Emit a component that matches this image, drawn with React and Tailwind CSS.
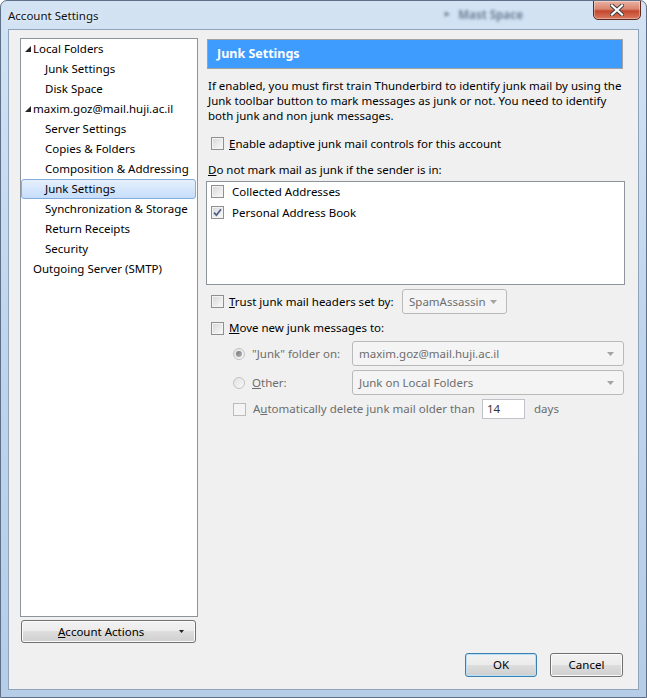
import React from "react";

const FONT = "font-['Noto_Sans','DejaVu_Sans',sans-serif]";

function Check({ checked = false, disabled = false }) {
  return (
    <span
      className={
        disabled
          ? "relative inline-flex w-[13px] h-[13px] shrink-0 border border-[#bcbcbc] bg-[#f4f4f4]"
          : "relative inline-flex w-[13px] h-[13px] shrink-0 border border-[#8e8f8f] bg-linear-to-br from-[#d6d6d6] to-[#fbfbfb] shadow-[inset_0_0_0_1px_#f3f3f3]"
      }
    >
      {checked && (
        <svg className="absolute left-[1px] top-[1px]" width="9" height="9" viewBox="0 0 9 9">
          <path d="M1 4.6 L3.4 7.2 L8 1.2" fill="none" stroke="#4c5f86" strokeWidth="1.7" />
        </svg>
      )}
    </span>
  );
}

function Radio({ selected = false }) {
  return (
    <span className="relative inline-flex items-center justify-center w-[12px] h-[12px] shrink-0 rounded-full border border-[#c2c2c2] bg-linear-to-br from-[#e2e2e2] to-[#f8f8f8]">
      {selected && <span className="w-[6px] h-[6px] rounded-full bg-linear-to-br from-[#777777] to-[#b5b5b5]" />}
    </span>
  );
}

function Combo({ text, className }) {
  return (
    <div
      className={
        "flex items-center h-[25px] border border-[#b9b9b9] rounded-[3px] bg-[#f4f4f4] pl-[6px] pr-[9px] text-[#6d6d6d] " +
        className
      }
    >
      <span className="flex-1 whitespace-nowrap">{text}</span>
      <svg width="7" height="4" viewBox="0 0 7 4">
        <path d="M0 0 H7 L3.5 4 Z" fill="#a3a3a3" />
      </svg>
    </div>
  );
}

function Tri() {
  return (
    <svg width="6" height="6" viewBox="0 0 6 6" className="shrink-0">
      <path d="M6 0 V6 H0 Z" fill="#262626" />
    </svg>
  );
}

function TreeRow({ children, top = false, selected = false, icon = false }) {
  return (
    <div
      className={
        selected
          ? "flex items-center h-[20px] mr-px pl-[23px] border border-[#84acdd] rounded-[3px] bg-linear-to-b from-[#e6f0fc] to-[#c6ddfb]"
          : top
          ? "flex items-center h-[20px] pl-[4px] gap-[2px]"
          : "flex items-center h-[20px] pl-[24px]"
      }
    >
      {icon && <Tri />}
      <span className="whitespace-nowrap">{children}</span>
    </div>
  );
}

const winBtn =
  "flex items-center border rounded-[3px] bg-[linear-gradient(#f2f2f2,#ebebeb_50%,#dddddd_50%,#cfcfcf)]";

export default function App() {
  return (
    <div
      className={
        FONT +
        " text-[11.5px] text-black w-[647px] h-[698px] flex flex-col overflow-hidden rounded-t-[7px] border border-[#5d7088] bg-linear-to-b from-[#d3e3f4] via-[#bfd5ed] to-[#b6cde8]"
      }
    >
      {/* title bar */}
      <div className="flex items-start h-[28px] shrink-0">
        <div className="pl-[7px] pt-[7px] leading-[15px] text-[#111] [text-shadow:0_0_6px_#ffffff]">Account Settings</div>
        <div className="ml-auto mr-[70px] mt-[5px] flex items-center gap-[8px] blur-[1.4px] opacity-60 text-[#2c3e58]">
          <span className="text-[7px]">&#9654;</span>
          <span className="font-bold">Mast Space</span>
        </div>
        <div className="-mt-px mr-[5px] w-[48px] h-[20px] flex items-center justify-center rounded-b-[5px] border border-[#5f2b20] bg-[linear-gradient(#eab2a3,#d9856f_45%,#c4482d_55%,#d87a60)] shadow-[inset_0_0_0_1px_rgba(255,255,255,0.35)]">
          <svg width="14" height="12" viewBox="0 0 14 12">
            <path
              d="M2 1.5 L12 10.5 M12 1.5 L2 10.5"
              stroke="#3b3b3b"
              strokeWidth="4"
              strokeLinecap="square"
            />
            <path d="M2 1.5 L12 10.5 M12 1.5 L2 10.5" stroke="#ffffff" strokeWidth="2.2" strokeLinecap="square" />
          </svg>
        </div>
      </div>

      {/* client area */}
      <div className="mx-[7px] h-[661px] shrink-0 bg-[#f0f0f0] border border-[#8fa3bb] flex flex-col pt-[8px] pl-[11px] pr-[13px]">
        <div className="flex">
          {/* left column */}
          <div className="w-[178px] shrink-0 flex flex-col">
            <div className="h-[579px] border border-[#8d949c] bg-white flex flex-col">
              <TreeRow top icon>Local Folders</TreeRow>
              <TreeRow>Junk Settings</TreeRow>
              <TreeRow>Disk Space</TreeRow>
              <TreeRow top icon>maxim.goz@mail.huji.ac.il</TreeRow>
              <TreeRow>Server Settings</TreeRow>
              <TreeRow>Copies &amp; Folders</TreeRow>
              <TreeRow>Composition &amp; Addressing</TreeRow>
              <TreeRow selected>Junk Settings</TreeRow>
              <TreeRow>Synchronization &amp; Storage</TreeRow>
              <TreeRow>Return Receipts</TreeRow>
              <TreeRow>Security</TreeRow>
              <div className="flex items-center h-[20px] pl-[12px]">Outgoing Server (SMTP)</div>
            </div>
            <div
              className={
                winBtn +
                " mt-[3px] ml-px w-[175px] h-[23px] border-[#707070] shadow-[inset_0_0_0_1px_#fbfbfb] pl-[36px] pr-[11px]"
              }
            >
              <span>
                <span className="underline">A</span>ccount Actions
              </span>
              <svg className="ml-auto" width="5" height="3" viewBox="0 0 5 3">
                <path d="M0 0 H5 L2.5 3 Z" fill="#222" />
              </svg>
            </div>
          </div>

          {/* right column */}
          <div className="ml-[8px] flex-1 flex flex-col">
            <div className="mt-px ml-px mr-[2px] h-[30px] border border-[#a2a2a2] bg-[#3d9cfe] flex items-center pl-[9px]">
              <span className="text-white font-bold text-[12.5px]">Junk Settings</span>
            </div>

            <div className="mt-[9px] pl-[2px] leading-[15px] whitespace-nowrap">
              If enabled, you must first train Thunderbird to identify junk mail by using the
              <br />
              Junk toolbar button to mark messages as junk or not. You need to identify
              <br />
              both junk and non junk messages.
            </div>

            <div className="mt-[13px] h-[15px] flex items-center pl-[5px] gap-[5px]">
              <Check />
              <span>
                <span className="underline">E</span>nable adaptive junk mail controls for this account
              </span>
            </div>

            <div className="mt-[11px] h-[15px] flex items-center pl-[2px]">
              <span>
                <span className="underline">D</span>o not mark mail as junk if the sender is in:
              </span>
            </div>

            <div className="mt-[4px] h-[104px] border border-[#8d949c] bg-white flex flex-col">
              <div className="h-[21px] pb-[2px] flex items-center pl-[4px] gap-[8px]">
                <Check />
                <span>Collected Addresses</span>
              </div>
              <div className="h-[21px] pb-[2px] flex items-center pl-[4px] gap-[8px]">
                <Check checked />
                <span>Personal Address Book</span>
              </div>
            </div>

            <div className="mt-[4px] h-[25px] flex items-center pl-[5px]">
              <Check />
              <span className="ml-[5px] w-[173px] whitespace-nowrap">
                <span className="underline">T</span>rust junk mail headers set by:
              </span>
              <Combo text="SpamAssassin" className="w-[105px]" />
            </div>

            <div className="mt-[4px] h-[20px] flex items-center pl-[5px] gap-[5px]">
              <Check />
              <span>
                <span className="underline">M</span>ove new junk messages to:
              </span>
            </div>

            <div className="mt-[3px] h-[25px] flex items-center pl-[27px] text-[#6d6d6d]">
              <Radio selected />
              <span className="ml-[7px] w-[100px] whitespace-nowrap">
                "<span className="underline">J</span>unk" folder on:
              </span>
              <Combo text="maxim.goz@mail.huji.ac.il" className="flex-1 mr-px" />
            </div>

            <div className="mt-[4px] h-[25px] flex items-center pl-[27px] text-[#6d6d6d]">
              <Radio />
              <span className="ml-[7px] w-[100px] whitespace-nowrap">
                <span className="underline">O</span>ther:
              </span>
              <Combo text="Junk on Local Folders" className="flex-1 mr-px" />
            </div>

            <div className="mt-[4px] h-[20px] flex items-center pl-[27px] text-[#6d6d6d]">
              <Check disabled />
              <span className="ml-[7px] w-[229px] whitespace-nowrap">
                A<span className="underline">u</span>tomatically delete junk mail older than
              </span>
              <div className="w-[43px] h-[20px] border border-[#bfc3c8] bg-white flex items-center pl-[4px] text-[#333]">
                14
              </div>
              <span className="ml-[9px]">days</span>
            </div>
          </div>
        </div>

        {/* bottom buttons */}
        <div className="mt-[10px] flex justify-end gap-[13px] pr-[2px]">
          <div
            className={
              winBtn +
              " w-[72px] h-[24px] justify-center border-[#3c7fb1] shadow-[inset_0_0_0_1px_#b8e0f6]"
            }
          >
            OK
          </div>
          <div
            className={
              winBtn + " w-[73px] h-[24px] justify-center border-[#707070] shadow-[inset_0_0_0_1px_#fbfbfb]"
            }
          >
            Cancel
          </div>
        </div>
      </div>
    </div>
  );
}
